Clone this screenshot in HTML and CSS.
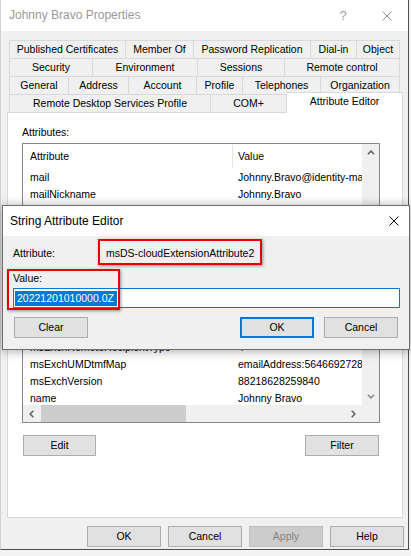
FILE: index.html
```html
<!DOCTYPE html>
<html>
<head>
<meta charset="utf-8">
<link rel="stylesheet" href="styles.css">
</head>
<body>
<div class="win">
  <div class="titlebar">
    <span class="title">Johnny Bravo Properties</span>
    <span class="tb-help">?</span>
    <span class="tb-close"><svg width="10" height="10" viewBox="0 0 10 10"><path d="M0.5 0.5L9.5 9.5M9.5 0.5L0.5 9.5" stroke="#8f8f8f" stroke-width="1" fill="none"/></svg></span>
  </div>

  <div class="tabs">
    <div class="tabrow r1">
      <div class="tab">Published Certificates</div>
      <div class="tab">Member Of</div>
      <div class="tab">Password Replication</div>
      <div class="tab">Dial-in</div>
      <div class="tab last">Object</div>
    </div>
    <div class="tabrow r2">
      <div class="tab">Security</div>
      <div class="tab">Environment</div>
      <div class="tab">Sessions</div>
      <div class="tab last">Remote control</div>
    </div>
    <div class="tabrow r3">
      <div class="tab">General</div>
      <div class="tab">Address</div>
      <div class="tab">Account</div>
      <div class="tab">Profile</div>
      <div class="tab">Telephones</div>
      <div class="tab last">Organization</div>
    </div>
    <div class="tabrow r4">
      <div class="tab">Remote Desktop Services Profile</div>
      <div class="tab">COM+</div>
      <div class="tab selected">Attribute Editor</div>
    </div>
  </div>

  <div class="panel">
    <div class="lbl">Attributes:</div>
    <div class="listbox">
      <div class="lv">
        <div class="lv-main">
          <div class="lv-head"><span class="c1">Attribute</span><span class="c2">Value</span></div>
          <div class="row"><span class="c1">mail</span><span class="c2">Johnny.Bravo@identity-man.com</span></div>
          <div class="row"><span class="c1">mailNickname</span><span class="c2">Johnny.Bravo</span></div>
          <div class="row"><span class="c1">msDS-cloudExtensionAttribute2</span><span class="c2">20221201010000.0Z</span></div>
          <div class="row"><span class="c1">msDS-ExternalDirectoryObjectId</span><span class="c2">User_8f1c2a44</span></div>
          <div class="row"><span class="c1">msExchArchiveQuota</span><span class="c2">104857600</span></div>
          <div class="row"><span class="c1">msExchArchiveWarnQuota</span><span class="c2">94371840</span></div>
          <div class="row"><span class="c1">msExchMailboxGuid</span><span class="c2">4e8a1b7c-22d1-4f0a</span></div>
          <div class="row"><span class="c1">msExchPoliciesIncluded</span><span class="c2">{26491cfc-9e50-4857}</span></div>
          <div class="row"><span class="c1">msExchRecipientDisplayType</span><span class="c2">-2147483642</span></div>
          <div class="row"><span class="c1">msExchRecipientTypeDetails</span><span class="c2">2147483648</span></div>
          <div class="row"><span class="c1">msExchRemoteRecipientType</span><span class="c2">4</span></div>
          <div class="row"><span class="c1">msExchUMDtmfMap</span><span class="c2">emailAddress:56466927282786</span></div>
          <div class="row"><span class="c1">msExchVersion</span><span class="c2">88218628259840</span></div>
          <div class="row"><span class="c1">name</span><span class="c2">Johnny Bravo</span></div>
        </div>
        <div class="vscroll">
          <div class="arrow"><svg width="8" height="5" viewBox="0 0 8 5"><path d="M0.8 4.3L4 1.1L7.2 4.3" stroke="#606060" stroke-width="1.5" fill="none"/></svg></div>
          <div class="arrow"><svg width="8" height="5" viewBox="0 0 8 5"><path d="M0.8 0.7L4 3.9L7.2 0.7" stroke="#8a8a8a" stroke-width="1.5" fill="none"/></svg></div>
        </div>
      </div>
      <div class="hbar">
        <div class="hscroll">
          <div class="harrow"><svg width="5" height="8" viewBox="0 0 5 8"><path d="M4.3 0.8L1.1 4L4.3 7.2" stroke="#606060" stroke-width="1.5" fill="none"/></svg></div>
          <div class="thumb"></div>
          <div class="hspace"></div>
          <div class="harrow"><svg width="5" height="8" viewBox="0 0 5 8"><path d="M0.7 0.8L3.9 4L0.7 7.2" stroke="#606060" stroke-width="1.5" fill="none"/></svg></div>
        </div>
        <div class="corner"></div>
      </div>
    </div>
    <div class="panel-btns">
      <button class="btn edit">Edit</button>
      <button class="btn">Filter</button>
    </div>
  </div>

  <div class="footer">
    <button class="btn">OK</button>
    <button class="btn">Cancel</button>
    <button class="btn disabled">Apply</button>
    <button class="btn">Help</button>
  </div>

  <div class="dlg">
    <div class="dlg-title">
      <span>String Attribute Editor</span>
      <svg width="10" height="10" viewBox="0 0 10 10"><path d="M0.5 0.5L9.5 9.5M9.5 0.5L0.5 9.5" stroke="#000" stroke-width="1" fill="none"/></svg>
    </div>
    <div class="dlg-body">
      <div class="dlg-row"><span class="k">Attribute:</span><span>msDS-cloudExtensionAttribute2</span></div>
      <div class="dlg-label">Value:</div>
      <div class="dlg-input"><span class="sel">20221201010000.0Z</span></div>
      <div class="dlg-btns">
        <button class="btn">Clear</button>
        <div class="grp">
          <button class="btn default">OK</button>
          <button class="btn">Cancel</button>
        </div>
      </div>
      <div class="mark mark-attr"></div>
      <div class="mark mark-value"></div>
    </div>
  </div>
</div>
</body>
</html>
```
FILE: styles.css
```css
* { box-sizing: border-box; }
html, body { margin: 0; padding: 0; }
body {
  width: 411px;
  height: 556px;
  overflow: hidden;
  background: #f4f4f4;
  font-family: "Liberation Sans", Arial, sans-serif;
  font-size: 10.5px;
  line-height: 13px;
  color: #000;
}
.win {
  position: relative;
  width: 409px;
  height: 550px;
  background: #f0f0f0;
  border-left: 1px solid #d2d2d2;
  border-right: 1px solid #4d4d4d;
  border-bottom: 1px solid #4d4d4d;
  display: flex;
  flex-direction: column;
}
.titlebar {
  flex: none;
  height: 31px;
  background: #fff;
  display: flex;
  align-items: center;
}
.title {
  flex: 1;
  padding-left: 8px;
  font-size: 12px;
  color: #999;
}
.tb-help {
  width: 46px;
  text-align: center;
  font-size: 13px;
  color: #9a9a9a;
}
.tb-close {
  width: 42px;
  display: flex;
  justify-content: center;
}

/* tabs */
.tabs { flex: none; margin-top: 9px; padding-left: 8px; }
.tabrow { display: flex; height: 18px; }
.tab {
  height: 18px;
  border: 1px solid #d9d9d9;
  border-right: none;
  border-bottom: none;
  display: flex;
  align-items: center;
  justify-content: center;
  white-space: nowrap;
  background: #f0f0f0;
}
.tab.last { border-right: 1px solid #d9d9d9; }
.r1 .tab:nth-child(1) { width: 116px; }
.r1 .tab:nth-child(2) { width: 68px; }
.r1 .tab:nth-child(3) { width: 117px; }
.r1 .tab:nth-child(4) { width: 46px; }
.r1 .tab:nth-child(5) { width: 44px; }
.r2 .tab:nth-child(1) { width: 83px; }
.r2 .tab:nth-child(2) { width: 105px; }
.r2 .tab:nth-child(3) { width: 87px; }
.r2 .tab:nth-child(4) { width: 116px; }
.r3 .tab:nth-child(1) { width: 59px; }
.r3 .tab:nth-child(2) { width: 60px; }
.r3 .tab:nth-child(3) { width: 68px; }
.r3 .tab:nth-child(4) { width: 46px; }
.r3 .tab:nth-child(5) { width: 78px; }
.r3 .tab:nth-child(6) { width: 80px; }
.r4 { height: 20px; margin-top: -2px; align-items: flex-end; }
.r4 .tab:nth-child(1) { width: 201px; }
.r4 .tab:nth-child(2) { width: 76px; }
.r4 .tab.selected {
  position: relative;
  z-index: 1;
  width: 117px;
  height: 21px;
  margin-bottom: -1px;
  background: #fff;
  border-right: 1px solid #d9d9d9;
  padding-bottom: 3px;
}

/* panel */
.panel {
  flex: none;
  margin-left: 6px;
  width: 396px;
  height: 406px;
  background: #fff;
  border: 1px solid #d9d9d9;
  padding: 12px 0 0 14px;
}
.lbl { line-height: 14px; }
.listbox {
  margin-top: 4px;
  width: 358px;
  height: 280px;
  border: 1px solid #828790;
  background: #fff;
  display: flex;
  flex-direction: column;
}
.lv { display: flex; height: 261px; }
.lv-main { width: 339px; overflow: hidden; }
.lv-head { display: flex; height: 25px; align-items: center; }
.c1 { flex: none; width: 210px; padding-left: 7px; white-space: nowrap; overflow: hidden; }
.c2 { flex: none; padding-left: 5px; white-space: nowrap; }
.lv-head .c1 { height: 23px; line-height: 23px; border-right: 1px solid #e5e5e5; }
.row { display: flex; height: 17px; line-height: 17px; }
.vscroll {
  width: 17px;
  background: #f0f0f0;
  display: flex;
  flex-direction: column;
  justify-content: space-between;
}
.arrow { height: 17px; display: flex; align-items: center; justify-content: center; }
.hbar { display: flex; height: 17px; }
.hscroll { width: 339px; background: #f0f0f0; display: flex; }
.harrow { flex: none; width: 17px; display: flex; align-items: center; justify-content: center; }
.thumb { flex: none; width: 145px; margin-left: 1px; background: #cdcdcd; }
.hspace { flex: 1; }
.corner { width: 17px; background: #f0f0f0; }

.btn {
  height: 21px;
  width: 74px;
  padding: 0;
  margin: 0;
  border: 1px solid #adadad;
  background: #e1e1e1;
  font: inherit;
  color: #000;
  display: flex;
  align-items: center;
  justify-content: center;
}
.btn.edit { width: 73px; }
.btn.disabled { background: #cccccc; border-color: #bfbfbf; color: #838383; }
.btn.default { border: 2px solid #0078d7; }
.panel-btns {
  display: flex;
  justify-content: space-between;
  width: 358px;
  margin-top: 12px;
  padding: 0 1px;
}
.footer {
  flex: none;
  display: flex;
  justify-content: flex-end;
  gap: 7px;
  margin-top: 8px;
  padding-right: 4px;
}

/* dialog */
.dlg {
  position: absolute;
  left: 1px;
  top: 205px;
  width: 408px;
  height: 145px;
  border: 1px solid #6e6e6e;
  background: #f0f0f0;
  box-shadow: 0 1px 10px rgba(0, 0, 0, 0.35);
  display: flex;
  flex-direction: column;
  z-index: 5;
}
.dlg-title {
  flex: none;
  height: 30px;
  background: #fff;
  display: flex;
  align-items: center;
  justify-content: space-between;
  padding: 0 10px 0 7px;
  font-size: 12px;
}
.dlg-body { position: relative; flex: 1; padding: 11px 9px 0 10px; }
.dlg-row { display: flex; }
.dlg-row .k { width: 93px; }
.dlg-label { margin-top: 12px; }
.dlg-input {
  margin-top: 3px;
  height: 20px;
  border: 1px solid #0078d7;
  background: #fff;
  display: flex;
  align-items: center;
  padding-left: 1px;
}
.sel { background: #0078d7; color: #fff; line-height: 15px; padding: 0 3px 0 2px; }
.dlg-btns {
  display: flex;
  justify-content: space-between;
  margin-top: 9px;
  padding: 0 2px 0 1px;
}
.grp { display: flex; gap: 10px; }
.mark {
  position: absolute;
  border: 2px solid #e60000;
  box-shadow: 1px 1px 3px rgba(0, 0, 0, 0.4);
}
.mark-attr { left: 95px; top: 3px; width: 164px; height: 26px; }
.mark-value { left: 4px; top: 33px; width: 113px; height: 41px; }
```
